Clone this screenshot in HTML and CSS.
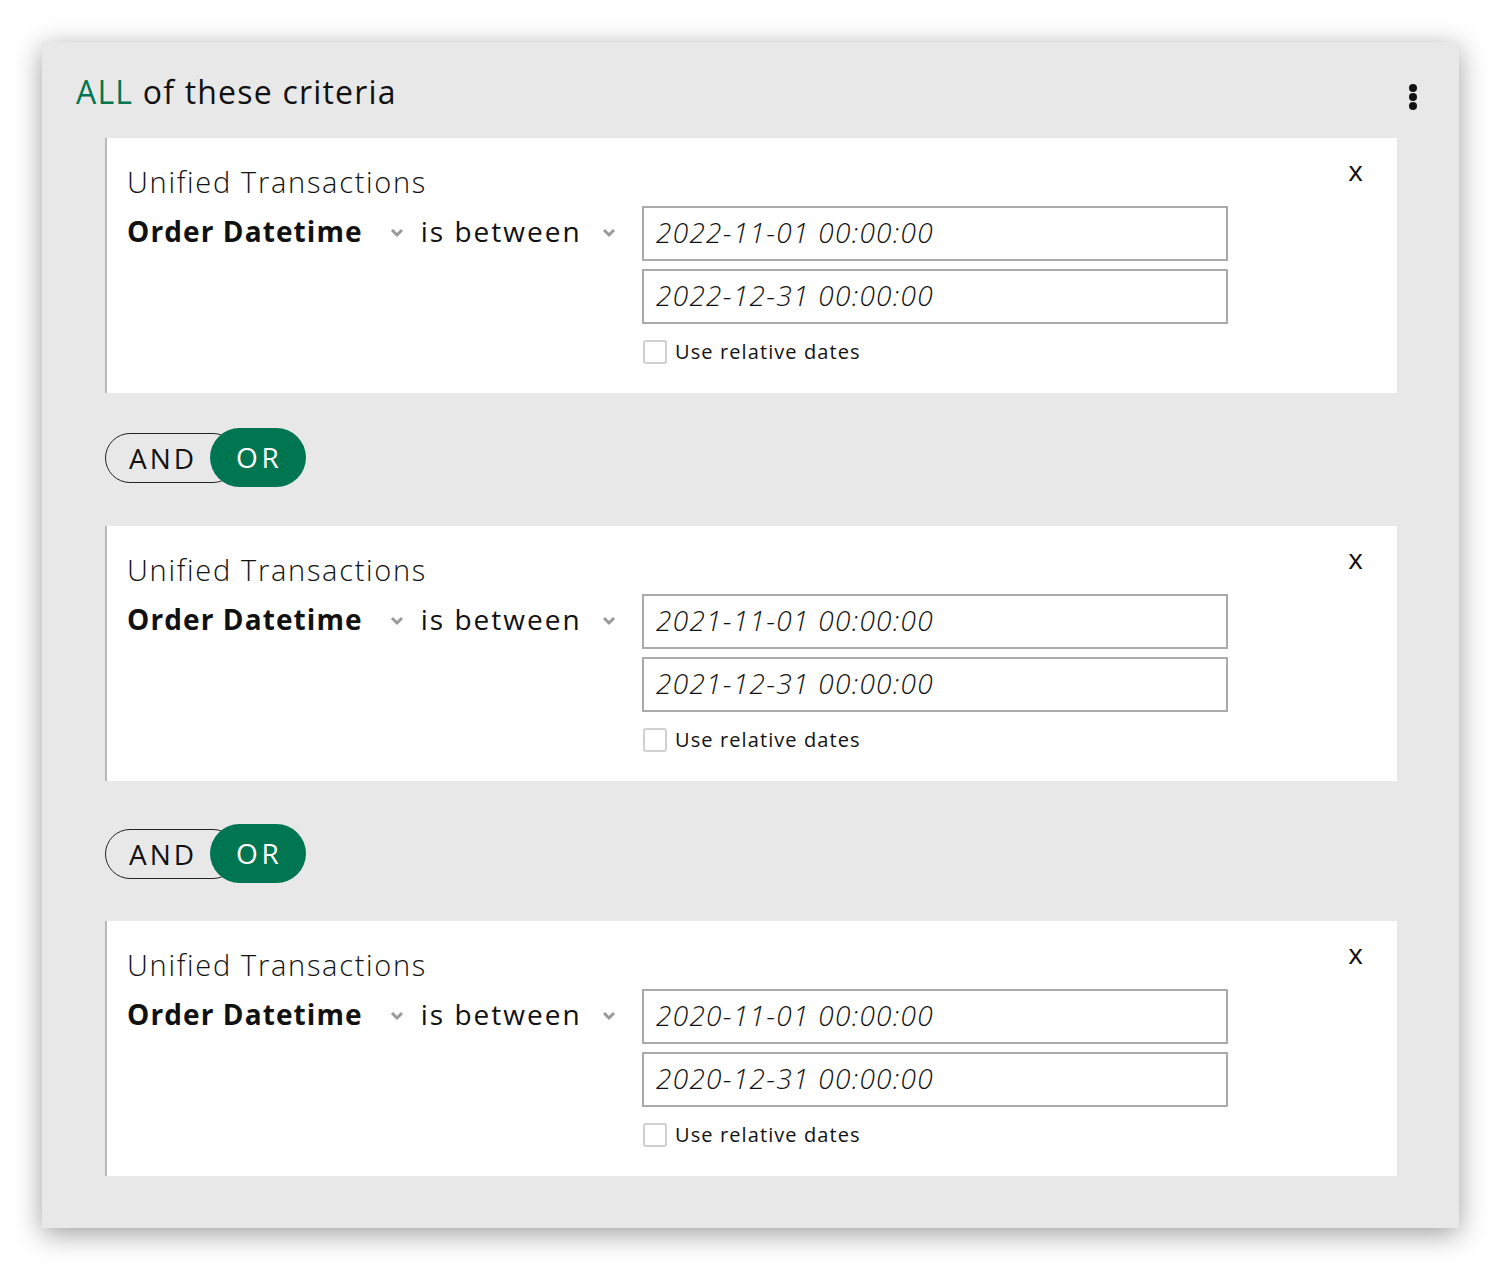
FILE: index.html
```html
<!DOCTYPE html>
<html>
<head>
<meta charset="utf-8">
<link rel="stylesheet" href="styles.css">
</head>
<body>
<div class="panel">
  <div class="panel-head">
    <div class="title"><span class="all">ALL</span> of these criteria</div>
    <div class="kebab"><span></span><span></span><span></span></div>
  </div>

  <div class="card">
    <div class="card-main">
      <div class="source">Unified Transactions</div>
      <div class="row">
        <div class="selects">
          <span class="field">Order Datetime</span>
          <svg class="chev" viewBox="0 0 14 10" width="14" height="10"><path d="M2 2 L7 7 L12 2" fill="none" stroke="#9a9a9a" stroke-width="3"/></svg>
          <span class="op">is between</span>
          <svg class="chev" viewBox="0 0 14 10" width="14" height="10"><path d="M2 2 L7 7 L12 2" fill="none" stroke="#9a9a9a" stroke-width="3"/></svg>
        </div>
        <div class="values">
          <div class="input">2022-11-01 00:00:00</div>
          <div class="input">2022-12-31 00:00:00</div>
          <label class="check"><span class="box"></span>Use relative dates</label>
        </div>
      </div>
    </div>
    <div class="close">x</div>
  </div>

  <div class="toggle">
    <span class="and">AND</span><span class="or">OR</span>
  </div>

  <div class="card">
    <div class="card-main">
      <div class="source">Unified Transactions</div>
      <div class="row">
        <div class="selects">
          <span class="field">Order Datetime</span>
          <svg class="chev" viewBox="0 0 14 10" width="14" height="10"><path d="M2 2 L7 7 L12 2" fill="none" stroke="#9a9a9a" stroke-width="3"/></svg>
          <span class="op">is between</span>
          <svg class="chev" viewBox="0 0 14 10" width="14" height="10"><path d="M2 2 L7 7 L12 2" fill="none" stroke="#9a9a9a" stroke-width="3"/></svg>
        </div>
        <div class="values">
          <div class="input">2021-11-01 00:00:00</div>
          <div class="input">2021-12-31 00:00:00</div>
          <label class="check"><span class="box"></span>Use relative dates</label>
        </div>
      </div>
    </div>
    <div class="close">x</div>
  </div>

  <div class="toggle toggle-second">
    <span class="and">AND</span><span class="or">OR</span>
  </div>

  <div class="card">
    <div class="card-main">
      <div class="source">Unified Transactions</div>
      <div class="row">
        <div class="selects">
          <span class="field">Order Datetime</span>
          <svg class="chev" viewBox="0 0 14 10" width="14" height="10"><path d="M2 2 L7 7 L12 2" fill="none" stroke="#9a9a9a" stroke-width="3"/></svg>
          <span class="op">is between</span>
          <svg class="chev" viewBox="0 0 14 10" width="14" height="10"><path d="M2 2 L7 7 L12 2" fill="none" stroke="#9a9a9a" stroke-width="3"/></svg>
        </div>
        <div class="values">
          <div class="input">2020-11-01 00:00:00</div>
          <div class="input">2020-12-31 00:00:00</div>
          <label class="check"><span class="box"></span>Use relative dates</label>
        </div>
      </div>
    </div>
    <div class="close">x</div>
  </div>
</div>
</body>
</html>
```

FILE: styles.css
```css
html, body {
  margin: 0;
  padding: 0;
  background: #ffffff;
}
body {
  font-family: "Open Sans", "DejaVu Sans", sans-serif;
  color: #111;
  padding: 42px 42px 45px 42px;
}
.panel {
  width: 1417px;
  height: 1186px;
  box-sizing: border-box;
  background: #e8e8e8;
  box-shadow: 0 6px 26px rgba(0, 0, 0, 0.38);
  padding: 0 62px 0 63px;
}
.panel-head {
  display: flex;
  justify-content: space-between;
  align-items: flex-start;
  height: 96px;
  margin-left: -29px;
  margin-right: -20px;
}
.title {
  font-size: 32px;
  font-weight: 400;
  letter-spacing: 1.2px;
  margin-top: 28px;
  line-height: 44px;
}
.all {
  color: #007650;
}
.kebab {
  display: flex;
  flex-direction: column;
  gap: 1px;
  margin-top: 42px;
}
.kebab span {
  width: 8px;
  height: 8px;
  border-radius: 50%;
  background: #111;
}
.card {
  background: #ffffff;
  border-left: 2px solid #b8b8b8;
  height: 255px;
  box-sizing: border-box;
  display: flex;
  justify-content: space-between;
  padding: 0 32px 0 20px;
}
.card-main {
  padding-top: 24px;
}
.source {
  font-size: 29px;
  font-weight: 300;
  letter-spacing: 1.7px;
  line-height: 40px;
  color: #111;
}
.row {
  display: flex;
  align-items: flex-start;
  margin-top: 4px;
}
.selects {
  display: flex;
  align-items: center;
  height: 50px;
  width: 515px;
}
.field {
  font-size: 28px;
  font-weight: 700;
  letter-spacing: 1.1px;
  margin-right: 27px;
}
.op {
  font-size: 28px;
  font-weight: 400;
  letter-spacing: 2px;
  margin-left: 17px;
  margin-right: 20px;
}
.chev {
  margin-top: 3px;
}
.values {
  display: flex;
  flex-direction: column;
  gap: 8px;
}
.input {
  width: 586px;
  height: 55px;
  box-sizing: border-box;
  border: 2px solid #aaaaaa;
  font-size: 28px;
  font-style: italic;
  font-weight: 300;
  letter-spacing: 1.3px;
  line-height: 48px;
  padding-left: 12px;
  color: #111;
}
.check {
  display: flex;
  align-items: center;
  font-size: 20px;
  font-weight: 400;
  letter-spacing: 1.1px;
  margin-top: 6px;
  gap: 8px;
  margin-left: 1px;
}
.box {
  width: 20px;
  height: 20px;
  border: 2px solid #d0d0d0;
  border-radius: 3px;
}
.close {
  font-size: 28px;
  font-weight: 400;
  margin-top: 12px;
  margin-right: 2px;
  line-height: 40px;
}
.toggle {
  display: flex;
  align-items: center;
  height: 59px;
  margin: 35px 0 39px 0;
}
.toggle-second {
  margin: 43px 0 38px 0;
}
.and {
  height: 50px;
  box-sizing: border-box;
  border: 1px solid #222;
  border-radius: 25px;
  font-size: 28px;
  letter-spacing: 3px;
  line-height: 48px;
  padding: 0 40px 0 23px;
  margin-right: -28px;
  color: #111;
}
.or {
  height: 59px;
  border-radius: 30px;
  background: #007650;
  color: #ffffff;
  font-size: 28px;
  letter-spacing: 3.5px;
  line-height: 59px;
  padding: 0 24px 0 26px;
  position: relative;
}
```
